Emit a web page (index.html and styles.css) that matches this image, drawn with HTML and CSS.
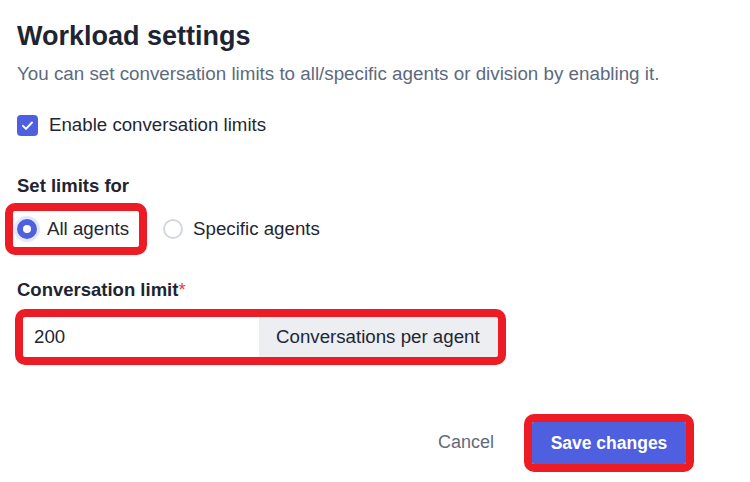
FILE: index.html
```html
<!DOCTYPE html>
<html lang="en">
<head>
<meta charset="utf-8">
<title>Workload settings</title>
<link rel="stylesheet" href="styles.css">
</head>
<body>
<main class="panel">
  <h1 class="title">Workload settings</h1>
  <p class="subtitle">You can set conversation limits to all/specific agents or division by enabling it.</p>

  <label class="check-row">
    <span class="checkbox">
      <svg viewBox="0 0 20 20" width="15" height="15" aria-hidden="true"><path d="M4 10.5l4 4 8-8.5" fill="none" stroke="#fff" stroke-width="2.6" stroke-linecap="round" stroke-linejoin="round"/></svg>
    </span>
    <span>Enable conversation limits</span>
  </label>

  <div class="field-label field-label--limits">Set limits for</div>
  <div class="radio-row">
    <label class="radio-option annotated"><span class="radio radio--checked"></span><span>All agents</span></label>
    <label class="radio-option"><span class="radio"></span><span>Specific agents</span></label>
  </div>

  <div class="field-label field-label--conv">Conversation limit<span class="req">*</span></div>
  <div class="input-group annotated">
    <span class="input-value">200</span>
    <span class="addon">Conversations per agent</span>
  </div>

  <div class="actions">
    <button class="btn-cancel" type="button">Cancel</button>
    <button class="btn-save annotated" type="button">Save changes</button>
  </div>
</main>
</body>
</html>
```

FILE: styles.css
```css
* { box-sizing: border-box; }

html, body {
  margin: 0;
  padding: 0;
  background: #ffffff;
}

body {
  font-family: "Liberation Sans", Arial, sans-serif;
  color: #1f2633;
  width: 750px;
  height: 482px;
  overflow: hidden;
}

.panel {
  padding: 20px 64px 0 17px;
}

.title {
  margin: 0;
  font-size: 27px;
  line-height: 32px;
  font-weight: 700;
  color: #1e2431;
}

.subtitle {
  margin: 10px 0 0;
  font-size: 18.8px;
  line-height: 24px;
  color: #5d6a7e;
  white-space: nowrap;
}

.check-row {
  margin-top: 28px;
  display: flex;
  align-items: center;
  gap: 11px;
  height: 22px;
  font-size: 18.7px;
  line-height: 22px;
  color: #1f2633;
}

.checkbox {
  width: 21px;
  height: 21px;
  border-radius: 4px;
  background: #4e60e0;
  display: flex;
  align-items: center;
  justify-content: center;
  flex: none;
}

.field-label {
  font-size: 18.5px;
  line-height: 22px;
  font-weight: 700;
  color: #1e2431;
}

.field-label--limits { margin-top: 39px; }
.field-label--conv { margin-top: 32px; }

.req { color: #ee3b3b; font-weight: 400; }

.radio-row {
  margin-top: 14px;
  margin-left: -4px;
  display: flex;
  align-items: center;
  gap: 20px;
}

.radio-option {
  display: flex;
  align-items: center;
  gap: 10px;
  height: 36px;
  padding: 0 10px 0 4px;
  font-size: 18.7px;
  color: #1f2633;
}

.radio {
  width: 20px;
  height: 20px;
  border-radius: 50%;
  border: 2px solid #d3d8df;
  background: #fff;
  flex: none;
  position: relative;
}

.radio--checked {
  border: none;
  background: #4e60e0;
  box-shadow: 0 0 0 3px #e3e8fb;
}

.radio--checked::after {
  content: "";
  position: absolute;
  left: 6px;
  top: 6px;
  width: 8px;
  height: 8px;
  border-radius: 50%;
  background: #fff;
}

.annotated {
  outline: 8px solid #ed1c24;
  outline-offset: 0;
  border-radius: 2px;
}

.input-group {
  margin-top: 16px;
  margin-left: 6px;
  width: 475px;
  height: 40px;
  display: flex;
  font-size: 18.7px;
  line-height: 40px;
}

.input-value {
  flex: 1;
  padding-left: 11px;
  background: #fff;
  color: #1f2633;
}

.addon {
  width: 239px;
  padding: 0 17px;
  background: #eceef1;
  color: #1f2633;
  white-space: nowrap;
}

.actions {
  margin-top: 65px;
  display: flex;
  justify-content: flex-end;
  align-items: center;
  gap: 38px;
}

.btn-cancel {
  border: none;
  background: none;
  padding: 0;
  font-family: inherit;
  font-size: 18px;
  color: #5f6b7c;
  position: relative;
  top: -1px;
}

.btn-save {
  border: none;
  width: 154px;
  height: 42px;
  background: #4e60e0;
  color: #fff;
  font-family: inherit;
  font-size: 17.5px;
  font-weight: 700;
  padding: 0;
}
```
